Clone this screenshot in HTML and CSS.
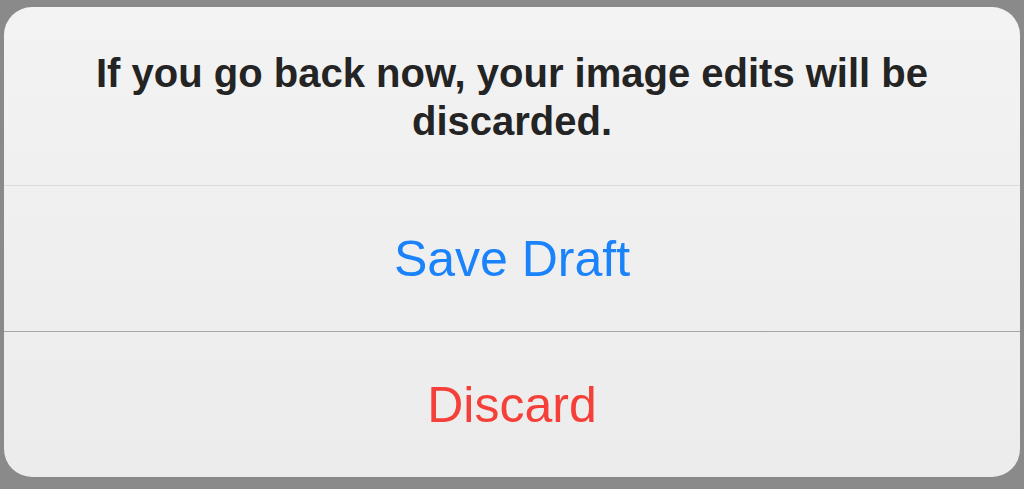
FILE: index.html
```html
<!DOCTYPE html>
<html lang="en">
<head>
<meta charset="utf-8">
<title>Alert</title>
<link rel="stylesheet" href="styles.css">
</head>
<body>
<div class="screen">
  <div class="alert">
    <div class="alert-message">If you go back now, your image edits will be discarded.</div>
    <div class="alert-action action-default">Save Draft</div>
    <div class="alert-action action-destructive">Discard</div>
  </div>
</div>
</body>
</html>
```
FILE: styles.css
```css
html, body {
  margin: 0;
  padding: 0;
  background: #8a8a8a;
}
.screen {
  width: 1024px;
  height: 489px;
  box-sizing: border-box;
  padding: 7px 4px 12px 4px;
  display: flex;
}
.alert {
  flex: 1;
  display: flex;
  flex-direction: column;
  border-radius: 28px;
  overflow: hidden;
  background: linear-gradient(180deg, #f3f3f3 0%, #efefef 50%, #ececec 100%);
  font-family: "Liberation Sans", Arial, sans-serif;
}
.alert-message {
  padding: 42px 90px 40px;
  text-align: center;
  font-size: 40px;
  line-height: 48px;
  font-weight: bold;
  color: #242424;
  border-bottom: 1px solid #dadada;
}
.alert-action {
  flex: 1;
  display: flex;
  align-items: center;
  justify-content: center;
  font-size: 50px;
}
.action-default {
  color: #1a82fb;
  border-bottom: 1px solid #a6a6a6;
}
.action-destructive {
  color: #f5403a;
}
```
